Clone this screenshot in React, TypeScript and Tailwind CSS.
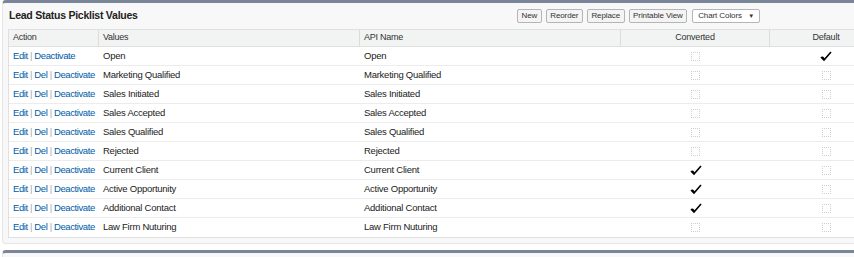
import React from "react";

const rows = [
  { v: "Open", del: false, conv: false, def: true },
  { v: "Marketing Qualified", del: true, conv: false, def: false },
  { v: "Sales Initiated", del: true, conv: false, def: false },
  { v: "Sales Accepted", del: true, conv: false, def: false },
  { v: "Sales Qualified", del: true, conv: false, def: false },
  { v: "Rejected", del: true, conv: false, def: false },
  { v: "Current Client", del: true, conv: true, def: false },
  { v: "Active Opportunity", del: true, conv: true, def: false },
  { v: "Additional Contact", del: true, conv: true, def: false },
  { v: "Law Firm Nuturing", del: true, conv: false, def: false },
];

function Check({ on }: { on: boolean }) {
  if (on)
    return (
      <svg width="12" height="11" viewBox="0 0 12 11" className="inline-block">
        <path d="M1 6 L4 9 L11 1" fill="none" stroke="#000" strokeWidth="1.6" />
        <path d="M2 6 L4.2 8.2" fill="none" stroke="#000" strokeWidth="2" />
      </svg>
    );
  return <span className="inline-block w-[9px] h-[9px] border border-dotted border-[#cfcfcf]" />;
}

function Btn({ children }: { children: React.ReactNode }) {
  return (
    <span className="inline-flex items-center h-[14px] px-[3.5px] border border-[#b5b5b5] rounded-[2px] bg-[#f4f4f4] text-[8px] tracking-[-0.1px] text-[#333] leading-none whitespace-nowrap">
      {children}
    </span>
  );
}

export default function App() {
  return (
    <div className="w-[854px] h-[257px] overflow-hidden bg-white font-['Liberation_Sans',Arial,sans-serif] text-[9.5px] tracking-[-0.25px] text-[#222]">
      <div className="ml-[2px] w-[900px] border border-[#e5e5e5] border-t-[3px] border-t-[#7b8598] rounded-t-[4px] rounded-b-[4px] bg-[#f8f8f8] pb-[5px]">
        <div className="flex items-center h-[26px] pl-[6px]">
          <div className="w-[508px] font-bold text-[10.5px] text-[#222]">Lead Status Picklist Values</div>
          <div className="flex items-center gap-[4px]">
            <Btn>New</Btn>
            <Btn>Reorder</Btn>
            <Btn>Replace</Btn>
            <Btn>Printable View</Btn>
            <span className="ml-[1px] inline-flex items-center h-[14px] w-[68px] pl-[5px] pr-[5px] justify-between border border-[#b5b5b5] rounded-[2px] bg-white text-[8px] tracking-[-0.1px] text-[#333] leading-none whitespace-nowrap">
              <span>Chart Colors</span>
              <span className="text-[6px]">▼</span>
            </span>
          </div>
        </div>
        <div className="ml-[5px] border border-[#e0e0e0] bg-white">
          <div className="flex h-[17px] items-center bg-[#f2f3f3] border-b border-[#e0e0e0] text-[9px] text-[#333]">
            <div className="w-[90px] pl-[4px] border-r border-[#dcdcdc] h-full flex items-center">Action</div>
            <div className="w-[261px] pl-[4px] border-r border-[#dcdcdc] h-full flex items-center">Values</div>
            <div className="w-[261px] pl-[4px] border-r border-[#dcdcdc] h-full flex items-center">API Name</div>
            <div className="w-[149px] border-r border-[#dcdcdc] h-full flex items-center justify-center">Converted</div>
            <div className="w-[112px] h-full flex items-center justify-center">Default</div>
          </div>
          {rows.map((r, i) => (
            <div key={i} className={`flex h-[19px] items-center ${i < rows.length - 1 ? "border-b border-[#ececec]" : ""}`}>
              <div className="w-[90px] pl-[4px] text-[#015ba7] whitespace-nowrap tracking-[-0.4px]">
                Edit <span className="text-[#aaa]">|</span>{" "}
                {r.del && (
                  <>
                    Del <span className="text-[#aaa]">|</span>{" "}
                  </>
                )}
                Deactivate
              </div>
              <div className="w-[261px] pl-[4px] text-[#222]">{r.v}</div>
              <div className="w-[261px] pl-[4px] text-[#222]">{r.v}</div>
              <div className="w-[149px] flex justify-center items-center">
                <Check on={r.conv} />
              </div>
              <div className="w-[112px] flex justify-center items-center">
                <Check on={r.def} />
              </div>
            </div>
          ))}
        </div>
      </div>
      <div className="ml-[2px] mt-[6px] w-[900px] h-[20px] border border-[#e5e5e5] border-t-[3px] border-t-[#7b8598] rounded-t-[4px] bg-[#f8f8f8]" />
    </div>
  );
}
